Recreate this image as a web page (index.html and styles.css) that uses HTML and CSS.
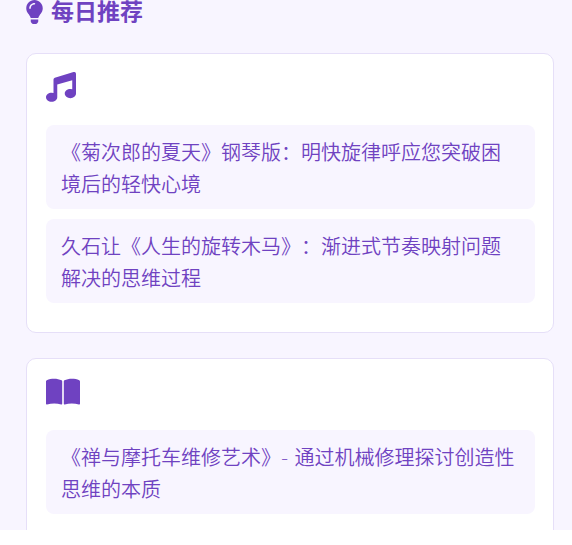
FILE: index.html
```html
<!DOCTYPE html>
<html lang="zh-CN">
<head>
<meta charset="utf-8">
<meta name="viewport" content="width=device-width, initial-scale=1">
<title>每日推荐</title>
<link rel="stylesheet" href="styles.css">
</head>
<body>
<main class="panel">
  <h2 class="heading">
    <svg class="bulb" viewBox="0 0 352 512" aria-hidden="true"><path d="M96.060 454.350c.01 6.290 1.870 12.450 5.360 17.690l17.090 25.690a31.990 31.990 0 0 0 26.640 14.280h61.710a31.990 31.990 0 0 0 26.640-14.280l17.090-25.690a31.990 31.990 0 0 0 5.360-17.690l.04-38.350H96.010l.05 38.350zM0 176c0 44.370 16.450 84.850 43.560 115.780 16.520 18.850 42.360 58.230 52.210 91.450h160.460c9.850-33.220 35.690-72.600 52.210-91.450C335.550 260.850 352 220.370 352 176 352 78.610 272.910-.3 175.450 0 73.440.310 0 82.970 0 176zm176-80c-44.110 0-80 35.890-80 80 0 8.840-7.160 16-16 16s-16-7.160-16-16c0-61.760 50.240-112 112-112 8.840 0 16 7.160 16 16s-7.160 16-16 16z"/></svg>
    每日推荐
  </h2>
  <section class="card" aria-label="音乐">
    <svg class="icon music" viewBox="0 0 512 512" aria-hidden="true"><path d="M470.380 1.510L150.410 96A32 32 0 0 0 128 126.510v232A112 112 0 0 0 96 354c-53 0-96 34-96 77s43 77 96 77 96-34 96-77V214.320l256-75v157A118 118 0 0 0 416 292c-53 0-96 34-96 77s43 77 96 77 96-34 96-77V32a32 32 0 0 0-41.620-30.490z"/></svg>
    <ul class="list">
      <li class="item">《菊次郎的夏天》钢琴版：明快旋律呼应您突破困境后的轻快心境</li>
      <li class="item">久石让《人生的旋转木马》：渐进式节奏映射问题解决的思维过程</li>
    </ul>
  </section>
  <section class="card" aria-label="阅读">
    <svg class="icon book" viewBox="0 0 34 30" aria-hidden="true"><path d="M0 4.500Q0 3.600.8 3.200C5 1.200 11.500 1.200 15.600 3.300Q16.200 3.600 16.200 4.300V26.700Q16.200 27.700 15.200 27.400C11 26.200 5.500 26.200 1 27.400Q0 27.600 0 26.700ZM34 4.500Q34 3.600 33.200 3.200C29 1.200 22.500 1.200 18.400 3.300Q17.800 3.600 17.800 4.300V26.700Q17.800 27.700 18.800 27.400C23 26.200 28.500 26.200 33 27.400Q34 27.600 34 26.700Z"/></svg>
    <ul class="list">
      <li class="item">《禅与摩托车维修艺术》- 通过机械修理探讨创造性思维的本质</li>
    </ul>
  </section>
</main>
</body>
</html>
```
FILE: styles.css
```css
* {
  box-sizing: border-box;
}

body {
  margin: 0;
  height: 100vh;
  padding-bottom: 15px;
  overflow: hidden;
  background: #fff;
  color: #6f42c1;
  font-family: "DejaVu Sans", "Noto Sans CJK SC", sans-serif;
  text-spacing-trim: space-all;
}

.panel {
  height: 100%;
  overflow: hidden;
  padding: 0 18px 0 26px;
  background: #f8f5ff;
}

.heading {
  display: flex;
  align-items: center;
  gap: 8px;
  margin: 0 0 29px;
  font-size: 23px;
  line-height: 24px;
  font-weight: 700;
}

.bulb {
  width: 17px;
  height: 24px;
  fill: currentColor;
}

.card {
  margin-bottom: 25px;
  padding: 18px 18px 19px 19px;
  border: 1px solid #e6dff8;
  border-radius: 10px;
  background: #fff;
}

.icon {
  display: block;
  height: 30px;
  margin-bottom: 23px;
  fill: currentColor;
}

.music {
  width: 30px;
}

.book {
  width: 34px;
}

.list {
  margin: 0;
  padding: 0;
  list-style: none;
}

.item {
  margin-bottom: 10px;
  padding: 12px 15px 8px;
  border-radius: 8px;
  background: #f8f5ff;
  font-size: 20px;
  line-height: 32px;
  font-weight: 350;
}
```
